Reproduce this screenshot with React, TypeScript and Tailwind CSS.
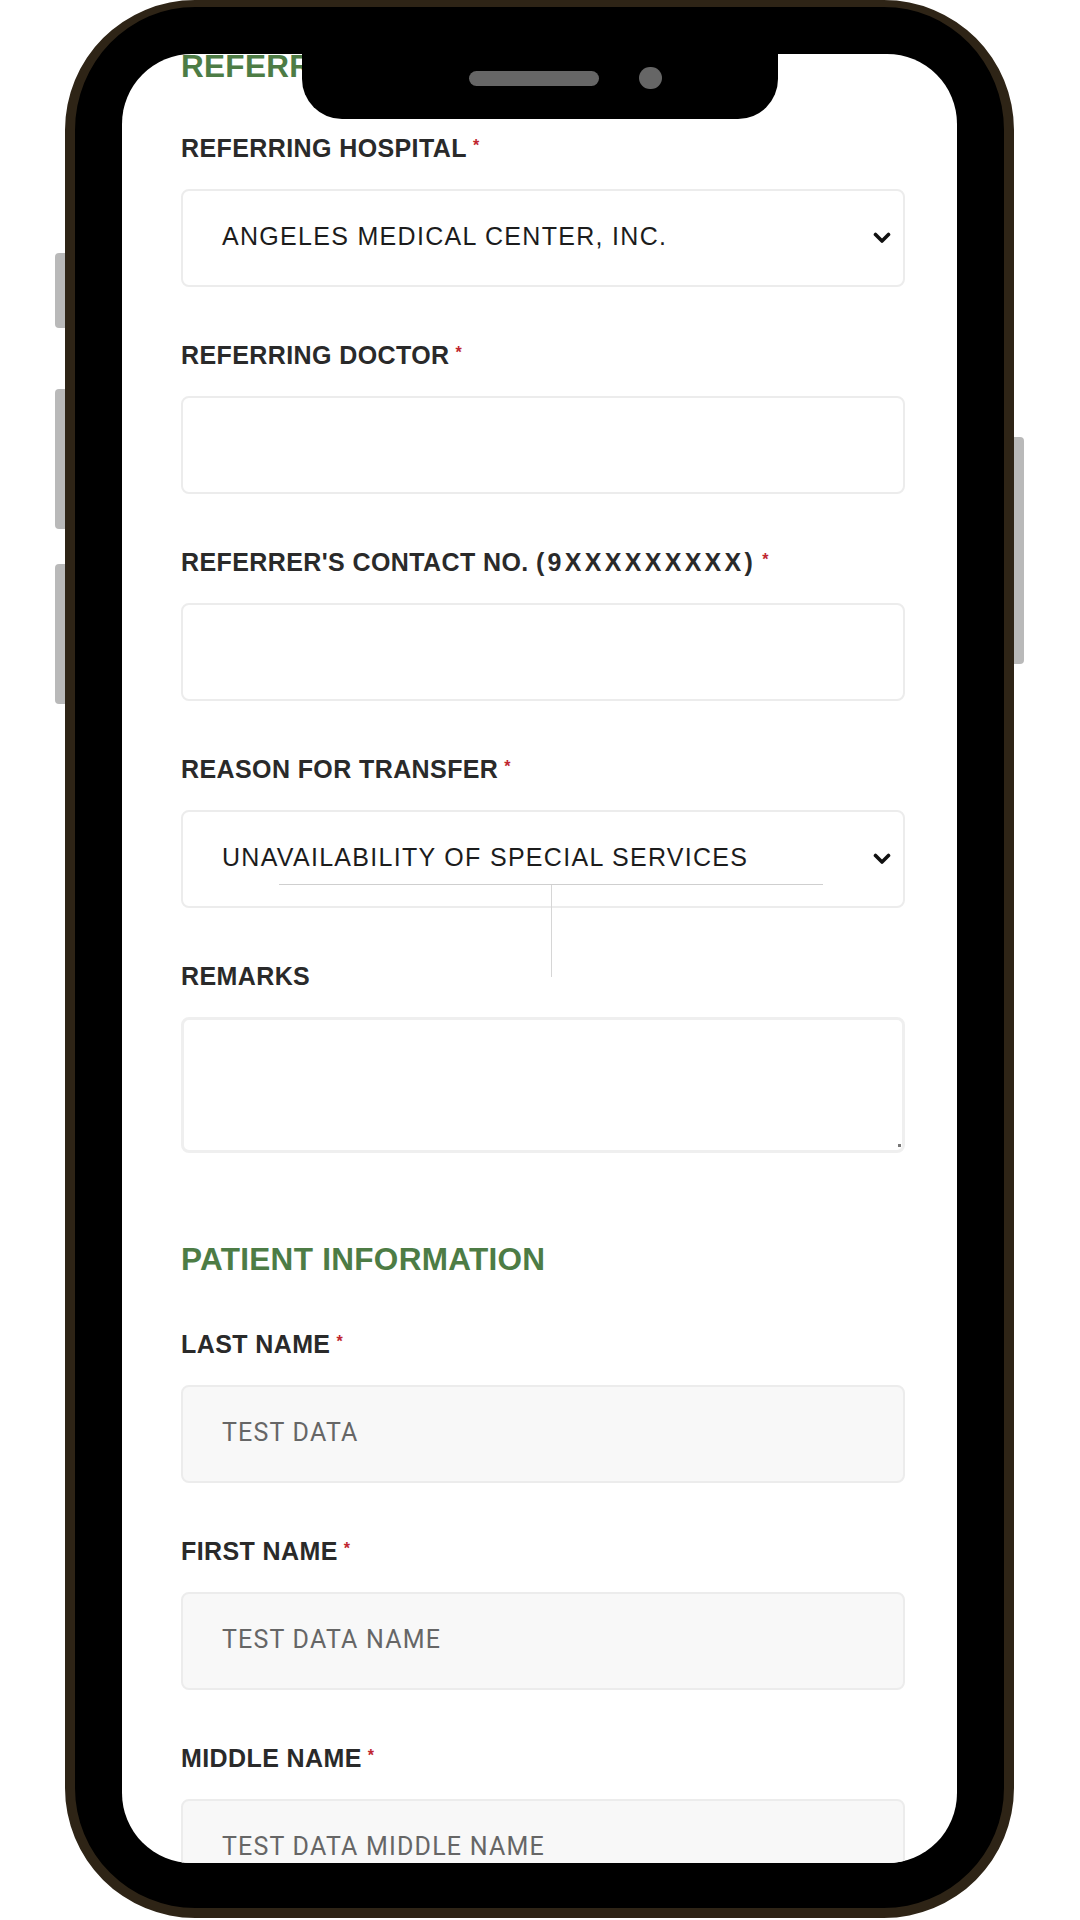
import type { ReactNode } from "react";

const boldFont = { fontFamily: "'Liberation Sans', Arial, sans-serif" };

const Label = ({ text, required = true }: { text: ReactNode; required?: boolean }) => (
  <div
    className="flex items-start h-[30px] leading-[30px] text-[25px] font-bold text-[#2a2a2a] tracking-[0.4px]"
    style={boldFont}
  >
    <span>{text}</span>
    {required && (
      <span className="ml-[6px] mt-[3px] text-[16px] leading-[20px] text-[#c0262f]">*</span>
    )}
  </div>
);

const Chevron = () => (
  <svg width="18" height="12" viewBox="0 0 18 12" fill="none">
    <polyline
      points="2.5,2.5 9,9 15.5,2.5"
      stroke="#111"
      strokeWidth="3.6"
      strokeLinecap="round"
      strokeLinejoin="round"
    />
  </svg>
);

type Field = {
  label: ReactNode;
  required?: boolean;
  kind: "select" | "input" | "textarea" | "disabled";
  value?: string;
};

const referral: Field[] = [
  { label: "REFERRING HOSPITAL", kind: "select", value: "ANGELES MEDICAL CENTER, INC." },
  { label: "REFERRING DOCTOR", kind: "input" },
  {
    label: (
      <>
        REFERRER'S CONTACT NO. <span className="tracking-[3.3px]">(9XXXXXXXXX)</span>
      </>
    ),
    kind: "input",
  },
  { label: "REASON FOR TRANSFER", kind: "select", value: "UNAVAILABILITY OF SPECIAL SERVICES" },
];

const patient: Field[] = [
  { label: "LAST NAME", kind: "disabled", value: "TEST DATA" },
  { label: "FIRST NAME", kind: "disabled", value: "TEST DATA NAME" },
  { label: "MIDDLE NAME", kind: "disabled", value: "TEST DATA MIDDLE NAME" },
];

const FieldBox = ({ field }: { field: Field }) => {
  if (field.kind === "textarea") {
    return (
      <div className="relative mt-[26px] h-[136px] rounded-[8px] border-[3px] border-[#efefef] bg-white">
        <div className="absolute right-[1px] bottom-[3px] w-[3px] h-[3px] bg-[#777]"></div>
      </div>
    );
  }
  const disabled = field.kind === "disabled";
  return (
    <div
      className={`mt-[26px] h-[98px] rounded-[8px] border-2 border-[#ececec] flex items-center pl-[39px] pr-[12px] pb-[3px] ${
        disabled ? "bg-[#f8f8f8]" : "bg-white"
      }`}
    >
      {disabled ? (
        <span
          className="text-[25px] text-[#666] tracking-[1.2px]"
          style={{ fontFamily: "Roboto, 'Liberation Sans', sans-serif" }}
        >
          {field.value}
        </span>
      ) : (
        <span
          className="flex-1 text-[25px] text-[#1c1c1c] tracking-[1.3px]"
          style={{ fontFamily: "'Liberation Sans', Arial, sans-serif" }}
        >
          {field.value}
        </span>
      )}
      {field.kind === "select" && (
        <div className="pt-[3px]">
          <Chevron />
        </div>
      )}
    </div>
  );
};

const FieldGroup = ({ field }: { field: Field }) => (
  <div className="mb-[53px]">
    <Label text={field.label} required={field.required !== false} />
    <FieldBox field={field} />
  </div>
);

const SectionTitle = ({ text, className }: { text: string; className: string }) => (
  <div
    className={`h-[38px] leading-[38px] text-[31.5px] font-bold text-[#4d7c45] tracking-[0.3px] ${className}`}
    style={boldFont}
  >
    {text}
  </div>
);

export default function App() {
  return (
    <div className="w-[1080px] h-[1920px] bg-white overflow-hidden">
      <div className="relative ml-[65px] w-[949px] h-[1918px]">
        {/* side buttons */}
        <div className="absolute left-[-10px] top-[253px] w-[10px] h-[75px] rounded-l-[4px] bg-[#b9b9b9]"></div>
        <div className="absolute left-[-10px] top-[389px] w-[10px] h-[140px] rounded-l-[4px] bg-[#b9b9b9]"></div>
        <div className="absolute left-[-10px] top-[564px] w-[10px] h-[140px] rounded-l-[4px] bg-[#b9b9b9]"></div>
        <div className="absolute right-[-10px] top-[437px] w-[10px] h-[227px] rounded-r-[4px] bg-[#b9b9b9]"></div>

        <div className="w-full h-full rounded-[130px] border-[10px] border-t-[7px] border-[#2e2416] bg-black pt-[47px] pb-[45px] px-[47px]">
          <div className="relative w-full h-full rounded-[70px] overflow-hidden bg-white">
            <div className="flex flex-col pl-[59px] pr-[52px]">
              <SectionTitle text="REFERRAL INFORMATION" className="-mt-[7px] mb-[48px]" />
              {referral.map((f, i) => (
                <FieldGroup key={i} field={f} />
              ))}
              <div>
                <Label text="REMARKS" required={false} />
                <FieldBox field={{ label: "REMARKS", kind: "textarea" }} />
              </div>

              <SectionTitle text="PATIENT INFORMATION" className="mt-[87px] mb-[51px]" />
              {patient.map((f, i) => (
                <FieldGroup key={i} field={f} />
              ))}
            </div>

            {/* stray guide lines over the form */}
            <div className="absolute left-[157px] top-[830px] w-[544px] h-[1px] bg-[#cfcfcf]"></div>
            <div className="absolute left-[429px] top-[831px] w-[1px] h-[92px] bg-[#d6d6d6]"></div>

            {/* notch */}
            <div className="absolute top-0 left-[180px] w-[476px] h-[65px] bg-black rounded-b-[40px]">
              <div className="flex items-center h-[48px] pl-[167px] gap-[40px]">
                <div className="w-[130px] h-[15px] rounded-full bg-[#666]"></div>
                <div className="w-[23px] h-[22px] rounded-full bg-[#666]"></div>
              </div>
            </div>
          </div>
        </div>
      </div>
    </div>
  );
}
